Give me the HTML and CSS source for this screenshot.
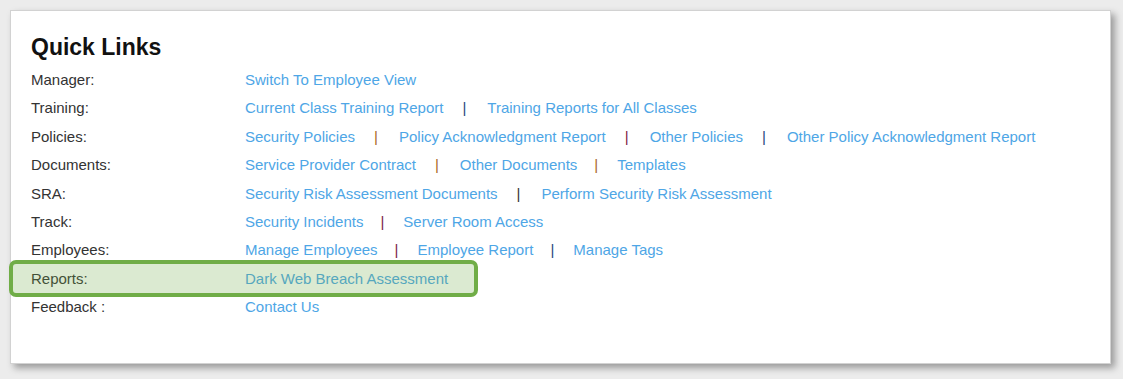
FILE: index.html
```html
<!DOCTYPE html>
<html lang="en">
<head>
    <meta charset="UTF-8">
    <meta name="viewport" content="width=device-width, initial-scale=1.0">
    <title>Quick Links</title>
    <link rel="stylesheet" href="styles.css">
</head>
<body>
    <div class="card">
        <h2>Quick Links</h2>

        <div class="links">
            <div class="row">
                <span class="label">Manager:</span>
                <span class="items"><a href="#">Switch To Employee View</a></span>
            </div>
            <div class="row">
                <span class="label">Training:</span>
                <span class="items">
                    <a href="#">Current Class Training Report</a>
                    <span class="sep blue">|</span>
                    <a href="#">Training Reports for All Classes</a>
                </span>
            </div>
            <div class="row">
                <span class="label">Policies:</span>
                <span class="items">
                    <a href="#">Security Policies</a>
                    <span class="sep orange">|</span>
                    <a href="#">Policy Acknowledgment Report</a>
                    <span class="sep maroon">|</span>
                    <a href="#">Other Policies</a>
                    <span class="sep blue">|</span>
                    <a href="#">Other Policy Acknowledgment Report</a>
                </span>
            </div>
            <div class="row">
                <span class="label">Documents:</span>
                <span class="items">
                    <a href="#">Service Provider Contract</a>
                    <span class="sep orange">|</span>
                    <a href="#">Other Documents</a>
                    <span class="sep orange tight">|</span>
                    <a href="#">Templates</a>
                </span>
            </div>
            <div class="row">
                <span class="label">SRA:</span>
                <span class="items">
                    <a href="#">Security Risk Assessment Documents</a>
                    <span class="sep dark">|</span>
                    <a href="#">Perform Security Risk Assessment</a>
                </span>
            </div>
            <div class="row">
                <span class="label">Track:</span>
                <span class="items">
                    <a href="#">Security Incidents</a>
                    <span class="sep maroon tight">|</span>
                    <a href="#">Server Room Access</a>
                </span>
            </div>
            <div class="row">
                <span class="label">Employees:</span>
                <span class="items">
                    <a href="#">Manage Employees</a>
                    <span class="sep maroon tight">|</span>
                    <a href="#">Employee Report</a>
                    <span class="sep blue tight">|</span>
                    <a href="#">Manage Tags</a>
                </span>
            </div>
            <div class="row marked">
                <span class="label">Reports:</span>
                <span class="items"><a href="#">Dark Web Breach Assessment</a></span>
                <!-- highlight annotation over the row -->
                <span class="highlight"></span>
            </div>
            <div class="row">
                <span class="label">Feedback :</span>
                <span class="items"><a href="#">Contact Us</a></span>
            </div>
        </div>
    </div>
</body>
</html>
```

FILE: styles.css
```css
* {
    margin: 0;
    padding: 0;
    box-sizing: border-box;
}

body {
    font-family: 'Liberation Sans', Arial, sans-serif;
    background: #ececec;
    padding: 10px 0 0 10px;
    min-height: 100vh;
}

.card {
    background: white;
    width: 1101px;
    height: 354px;
    border: 1px solid #d2d2d2;
    box-shadow: 4px 4px 7px rgba(0,0,0,0.35);
    padding: 22px 20px 0 20px;
}

h2 {
    font-size: 23px;
    font-weight: bold;
    color: #111;
    line-height: 28px;
    margin-bottom: 5px;
}

.row {
    position: relative;
    display: grid;
    grid-template-columns: 214px 1fr;
    font-size: 15px;
    line-height: 28.4px;
}

.label {
    color: #333;
}

.items {
    display: flex;
    white-space: nowrap;
}

.items a {
    color: #4ea6e6;
    text-decoration: none;
}

.sep {
    margin: 0 21px 0 19px;
    font-size: 15px;
}

.sep.tight {
    margin: 0 19px 0 17px;
}

.sep.blue { color: #24467e; }
.sep.orange { color: #a9652a; }
.sep.maroon { color: #7d1d45; }
.sep.dark { color: #333; }

.highlight {
    position: absolute;
    left: -22px;
    top: -5px;
    width: 469px;
    height: 37px;
    border: 4px solid #70ad47;
    border-radius: 7px;
    background: rgba(112,173,71,0.25);
}
```
